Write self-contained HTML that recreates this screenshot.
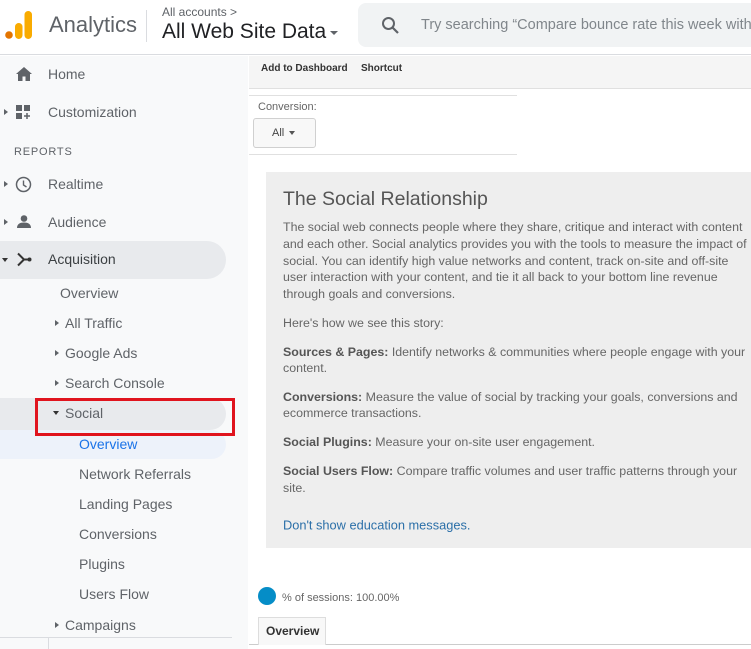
<!DOCTYPE html>
<html><head><meta charset="utf-8"><style>
*{margin:0;padding:0;box-sizing:border-box}
body{width:751px;height:649px;overflow:hidden;background:#fff;font-family:"Liberation Sans",Arial,sans-serif;position:relative}
.a{position:absolute;white-space:nowrap}
.side{position:absolute;left:0;top:56px;width:248px;height:593px;background:#f8f9fa}
.nav{position:absolute;font-size:14px;color:#5f6368;transform:translateY(-50%)}
.tri{position:absolute;width:0;height:0;border-top:3.5px solid transparent;border-bottom:3.5px solid transparent;border-left:4px solid #5f6368;transform:translateY(-50%)}
.tri.d{border-left:3.5px solid transparent;border-right:3.5px solid transparent;border-top:4px solid #333;border-bottom:0}
.card{position:absolute;left:266px;top:172px;width:490px;height:376px;background:#eeeeee}
.t{position:absolute;left:283px;font-size:12.4px;color:#666;white-space:nowrap;transform:translateY(-50%)}
.t b{color:#555}
</style></head><body>
<div class="a" style="left:0;top:0;width:751px;height:55px;border-bottom:1px solid #dadce0;background:#fff"></div>
<svg class="a" style="left:5px;top:10px" width="28" height="30"><circle cx="4" cy="25" r="3.8" fill="#e37400"/><rect x="10" y="13" width="7.5" height="16" rx="3.7" fill="#f9ab00"/><rect x="19.5" y="1" width="7.5" height="28" rx="3.7" fill="#f9ab00"/></svg>
<div class="a" style="left:49px;top:12px;font-size:22px;color:#5f6368">Analytics</div>
<div class="a" style="left:146px;top:10px;width:1px;height:32px;background:#dadce0"></div>
<div class="a" style="left:162px;top:5px;font-size:12px;color:#5f6368">All accounts &gt;</div>
<div class="a" style="left:162px;top:20px;font-size:21px;color:#202124">All Web Site Data</div>
<div class="a" style="left:330px;top:31px;border-left:4.5px solid transparent;border-right:4.5px solid transparent;border-top:4.5px solid #5f6368"></div>
<div class="a" style="left:358px;top:3px;width:400px;height:44px;background:#f1f3f4;border-radius:8px"></div>
<svg class="a" style="left:381px;top:16px" width="20" height="20"><circle cx="7.5" cy="7.5" r="5.5" fill="none" stroke="#5f6368" stroke-width="2"/><line x1="11.5" y1="11.5" x2="17" y2="17" stroke="#5f6368" stroke-width="2.2"/></svg>
<div class="a" style="left:421px;top:17px;font-size:14.5px;color:#80868b">Try searching “Compare bounce rate this week with</div>

<div class="side"></div>
<div class="a" style="left:0;top:241px;width:226px;height:38px;background:#e8eaed;border-radius:0 19px 19px 0"></div>
<div class="a" style="left:0;top:398px;width:226px;height:32px;background:#e8eaed;border-radius:0 16px 16px 0"></div>
<div class="a" style="left:0;top:430px;width:226px;height:29px;background:#edf2fa;border-radius:0 15px 15px 0"></div>

<svg class="a" style="left:16px;top:67px" width="16" height="14"><path d="M8 0L0 7h2v7h4.5V9.5h3V14H14V7h2z" fill="#5f6368"/></svg>
<div class="nav" style="left:48px;top:74px">Home</div>
<div class="tri" style="left:4px;top:112px"></div>
<svg class="a" style="left:16px;top:105px" width="16" height="16"><rect x="0" y="0" width="6" height="6" fill="#5f6368"/><rect x="8" y="0" width="6" height="6" fill="#5f6368"/><rect x="0" y="8" width="6" height="6" fill="#5f6368"/><path d="M11 8v6M8 11h6" stroke="#5f6368" stroke-width="1.5"/></svg>
<div class="nav" style="left:48px;top:112px">Customization</div>
<div class="nav" style="left:14px;top:152px;font-size:11px;letter-spacing:.8px">REPORTS</div>
<div class="tri" style="left:4px;top:184px"></div>
<svg class="a" style="left:15px;top:176px" width="17" height="17"><circle cx="8.5" cy="8.5" r="7" fill="none" stroke="#5f6368" stroke-width="1.5"/><path d="M8.5 4.5v4.5l3 2" fill="none" stroke="#5f6368" stroke-width="1.4"/></svg>
<div class="nav" style="left:48px;top:184px">Realtime</div>
<div class="tri" style="left:4px;top:222px"></div>
<svg class="a" style="left:16px;top:215px" width="16" height="14"><circle cx="8" cy="3.5" r="3.3" fill="#5f6368"/><path d="M1 13c0-4 3-5.5 7-5.5s7 1.5 7 5.5z" fill="#5f6368"/></svg>
<div class="nav" style="left:48px;top:222px">Audience</div>
<div class="tri d" style="left:2px;top:260px"></div>
<svg class="a" style="left:16px;top:252px" width="16" height="15"><path d="M2 1.5l6 6-6 6M8 7.5h5" fill="none" stroke="#333" stroke-width="2"/><circle cx="13.5" cy="7.5" r="2" fill="#333"/></svg>
<div class="nav" style="left:48px;top:259px;color:#3c4043">Acquisition</div>
<div class="nav" style="left:60px;top:293px">Overview</div>
<div class="tri" style="left:55px;top:323px"></div><div class="nav" style="left:65px;top:323px">All Traffic</div>
<div class="tri" style="left:55px;top:353px"></div><div class="nav" style="left:65px;top:353px">Google Ads</div>
<div class="tri" style="left:55px;top:383px"></div><div class="nav" style="left:65px;top:383px">Search Console</div>
<div class="tri d" style="left:53px;top:413px"></div><div class="nav" style="left:65px;top:413px">Social</div>
<div class="nav" style="left:79px;top:444px;color:#1a73e8">Overview</div>
<div class="nav" style="left:79px;top:474px">Network Referrals</div>
<div class="nav" style="left:79px;top:504px">Landing Pages</div>
<div class="nav" style="left:79px;top:534px">Conversions</div>
<div class="nav" style="left:79px;top:564px">Plugins</div>
<div class="nav" style="left:79px;top:594px">Users Flow</div>
<div class="tri" style="left:55px;top:625px"></div><div class="nav" style="left:65px;top:625px">Campaigns</div>
<div class="a" style="left:0;top:637px;width:232px;height:1px;background:#dadce0"></div>
<div class="a" style="left:48px;top:637px;width:1px;height:12px;background:#dadce0"></div>
<div class="a" style="left:35px;top:398px;width:200px;height:38px;border:3px solid #e0141e"></div>

<div class="a" style="left:249px;top:56px;width:502px;height:33px;background:#f5f5f5;border-bottom:1px solid #e0e0e0"></div>
<div class="a" style="left:261px;top:63px;font-size:10px;font-weight:bold;color:#333">Add to Dashboard</div>
<div class="a" style="left:361px;top:63px;font-size:10px;font-weight:bold;color:#333">Shortcut</div>
<div class="a" style="left:249px;top:95px;width:268px;height:1px;background:#e0e0e0"></div>
<div class="a" style="left:258px;top:101px;font-size:11px;color:#666">Conversion:</div>
<div class="a" style="left:253px;top:118px;width:63px;height:30px;border:1px solid #d0d0d0;border-radius:3px;background:#f8f8f8"></div>
<div class="a" style="left:272px;top:127px;font-size:11px;color:#444">All</div>
<div class="a" style="left:289px;top:131px;border-left:3.5px solid transparent;border-right:3.5px solid transparent;border-top:4px solid #555"></div>
<div class="a" style="left:249px;top:154px;width:268px;height:1px;background:#e0e0e0"></div>

<div class="card"></div>
<div class="a" style="left:283px;top:188px;font-size:19.5px;color:#555">The Social Relationship</div>
<div class="t" style="top:227px">The social web connects people where they share, critique and interact with content</div>
<div class="t" style="top:244px">and each other. Social analytics provides you with the tools to measure the impact of</div>
<div class="t" style="top:261px">social. You can identify high value networks and content, track on-site and off-site</div>
<div class="t" style="top:277px">user interaction with your content, and tie it all back to your bottom line revenue</div>
<div class="t" style="top:294px">through goals and conversions.</div>
<div class="t" style="top:323px">Here's how we see this story:</div>
<div class="t" style="top:352px"><b>Sources &amp; Pages:</b> Identify networks &amp; communities where people engage with your</div>
<div class="t" style="top:368px">content.</div>
<div class="t" style="top:397px"><b>Conversions:</b> Measure the value of social by tracking your goals, conversions and</div>
<div class="t" style="top:413px">ecommerce transactions.</div>
<div class="t" style="top:442px"><b>Social Plugins:</b> Measure your on-site user engagement.</div>
<div class="t" style="top:471px"><b>Social Users Flow:</b> Compare traffic volumes and user traffic patterns through your</div>
<div class="t" style="top:488px">site.</div>
<div class="t" style="top:525px;color:#2b6fa8;font-size:12.8px">Don't show education messages.</div>

<div class="a" style="left:258px;top:587px;width:18px;height:18px;border-radius:50%;background:#058dc7"></div>
<div class="a" style="left:282px;top:592px;font-size:11px;color:#666">% of sessions: 100.00%</div>
<div class="a" style="left:249px;top:644px;width:502px;height:1px;background:#ccc"></div>
<div class="a" style="left:258px;top:617px;width:68px;height:28px;border:1px solid #ddd;border-bottom:none;background:#f8f8f8"></div>
<div class="a" style="left:266px;top:624px;font-size:12px;font-weight:bold;color:#333">Overview</div>
</body></html>
